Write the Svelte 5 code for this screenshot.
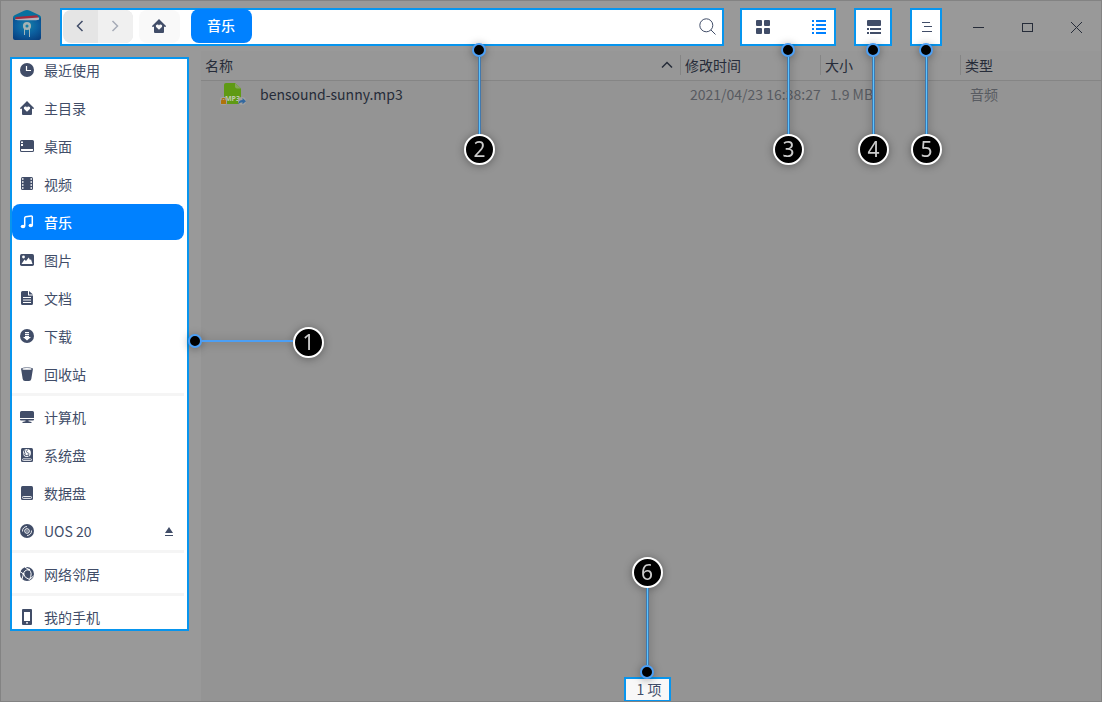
<script>
  const groups = [
    [
      { name: '最近使用', icon: 'recent' },
      { name: '主目录', icon: 'home' },
      { name: '桌面', icon: 'desktop' },
      { name: '视频', icon: 'video' },
      { name: '音乐', icon: 'music', active: true },
      { name: '图片', icon: 'picture' },
      { name: '文档', icon: 'document' },
      { name: '下载', icon: 'download' },
      { name: '回收站', icon: 'trash' }
    ],
    [
      { name: '计算机', icon: 'computer' },
      { name: '系统盘', icon: 'system' },
      { name: '数据盘', icon: 'disk' },
      { name: 'UOS 20', icon: 'optical', eject: true }
    ],
    [{ name: '网络邻居', icon: 'network' }],
    [{ name: '我的手机', icon: 'phone' }]
  ];
</script>

{#snippet icon(kind)}
  <svg class="icon" viewBox="0 0 14 14" width="14" height="14" fill="currentColor" aria-hidden="true">
    {#if kind === 'recent'}
      <circle cx="7" cy="7" r="7" />
      <path d="M6.500 3v4.500H11" fill="none" stroke="#fff" stroke-width="1.2" />
    {:else if kind === 'home'}
      <path fill-rule="evenodd" d="M7 0 14 7v.8h-2V13a1 1 0 0 1-1 1H3a1 1 0 0 1-1-1V7.800H0V7zM7 10.800 9.900 8C10.700 6.800 9.700 5.500 8.500 5.500 7.700 5.500 7.200 6 7 6.500 6.800 6 6.300 5.500 5.500 5.500 4.300 5.500 3.300 6.800 4.100 8z" />
    {:else if kind === 'desktop'}
      <path fill-rule="evenodd" d="M1.500 1h11A1.500 1.500 0 0 1 14 2.500v9a1.500 1.500 0 0 1-1.500 1.500h-11A1.500 1.500 0 0 1 0 11.500v-9A1.500 1.500 0 0 1 1.500 1zM1 2.500V4h2V2.500zM1 5v2h2V5zM1 10v1.500l.5.5h11l.5-.5V10z" />
    {:else if kind === 'video'}
      <rect x="1" y="0" width="12" height="13" rx="1.500" />
      <path d="M2 2h1.500M2 5h1.500M2 8h1.500M2 11h1.500M10.500 2H12M10.500 5H12M10.500 8H12M10.500 11H12" stroke="#fff" stroke-width="1.700" />
    {:else if kind === 'music'}
      <path d="M4.700 11V3q0-1 1-1.200L11.300 1q1-.1 1 1v8.500" fill="none" stroke="currentColor" stroke-width="1.500" />
      <ellipse cx="3" cy="11.500" rx="2.300" ry="1.800" />
      <ellipse cx="10.800" cy="10.500" rx="2.200" ry="1.800" />
    {:else if kind === 'picture'}
      <rect y="1" width="14" height="12" rx="1.700" />
      <circle cx="3.500" cy="4" r="1.400" fill="#fff" />
      <path d="M1.500 11 4.500 6.500 6 8 8.700 4.500 10 7l1-.7L12.500 11z" fill="#fff" />
    {:else if kind === 'document'}
      <path d="M2.500 0H8v4.500h5v8a1.500 1.500 0 0 1-1.500 1.500h-9A1.500 1.500 0 0 1 1 12.500v-11A1.500 1.500 0 0 1 2.500 0zM9 0l4 3.500H9z" />
      <path d="M3 6.500h8M3 9h8M3 11.500h8" stroke="#fff" />
    {:else if kind === 'download'}
      <circle cx="7" cy="7" r="7" />
      <path d="M5 3h4v1.200H5zM5 5h4v1.200H5zM5 7h4v1h2L7 11.500 3 8h2z" fill="#fff" />
    {:else if kind === 'trash'}
      <path d="M1 1.500C2 0 12 0 13 1.500L11.300 12Q11 14 9 14H5Q3 14 2.700 12z" />
      <ellipse cx="7" cy="1.900" rx="4.600" ry=".9" fill="#fff" />
    {:else if kind === 'computer'}
      <path d="M1.500 1h11A1.500 1.500 0 0 1 14 2.500V8H0V2.500A1.500 1.500 0 0 1 1.500 1zM0 9h14v.5q0 1-1 1H1q-1 0-1-1zM5.500 10.500h3v.7l3 .8v1h-9v-1l3-.8z" />
    {:else if kind === 'system'}
      <rect x="1" width="12" height="14" rx="1.500" />
      <circle cx="7" cy="5" r="3.900" fill="#fff" />
      <path d="M5 1.700Q3.500 4 5.500 6.500M7.500 1.500Q5.500 4 7.500 5 9.500 4 8.500 8.500M3.500 6Q6 9 8.500 7" fill="none" stroke="currentColor" stroke-width=".9" />
      <rect x="2.500" y="10.800" width="9" height="1.700" rx=".8" fill="none" stroke="#fff" stroke-width=".8" />
    {:else if kind === 'disk'}
      <rect x="1" width="12" height="14" rx="1.500" />
      <rect x="2.500" y="10.500" width="9" height="1.900" rx=".8" fill="none" stroke="#fff" stroke-width=".9" />
    {:else if kind === 'optical'}
      <circle cx="7" cy="7" r="7" />
      <circle cx="7" cy="7" r="2.300" fill="none" stroke="#fff" />
      <circle cx="7" cy="7" r=".7" fill="#fff" />
      <path d="M2.500 7.500A4.500 4.500 0 0 1 7 2.500M11.500 6.500A4.500 4.500 0 0 1 7 11.500" fill="none" stroke="#fff" stroke-width=".9" />
    {:else if kind === 'network'}
      <circle cx="7" cy="7" r="7" />
      <path d="M9 2.500Q4 3 3.500 7 4.500 11 9.500 12.500M9 2.500Q13 6 9.500 12.500M0 4.500 3.500 7 2 12M9 2.500 5 .3M9.500 12.500l4-3.500" fill="none" stroke="#fff" />
      <circle cx="9" cy="2.700" r="1" fill="#fff" />
      <circle cx="3.500" cy="7" r="1" fill="#fff" />
    {:else if kind === 'phone'}
      <path fill-rule="evenodd" d="M3 -1h8a1 1 0 0 1 1 1v14a1 1 0 0 1-1 1H3a1 1 0 0 1-1-1V0a1 1 0 0 1 1-1zM4 2v9h6V2zM6 12.200v1.300h2v-1.300z" />
    {/if}
  </svg>
{/snippet}

{#snippet callout(number, direction)}
  <span class="callout {direction}">
    <span class="dot"></span>
    <span class="line"></span>
    <span class="number">{number}</span>
  </span>
{/snippet}

<div class="window">
  <header>
    <svg class="logo" viewBox="0 0 28 30" width="28" height="30" aria-hidden="true">
      <defs>
        <radialGradient id="folder" cx=".5" cy=".35" r=".75">
          <stop offset="0" stop-color="#1583a8" />
          <stop offset=".5" stop-color="#0c60a0" />
          <stop offset="1" stop-color="#083f7e" />
        </radialGradient>
      </defs>
      <path d="M0 7.500Q0 6 1.500 5.300L11 .8Q14-.6 17 .8L26.500 5.300Q28 6 28 7.500V12H0z" fill="#07719f" />
      <path d="M2.500 7 24 5.300 26 8v3H2z" fill="#a22a3c" />
      <path d="M2 9.200 26 7.500V11H2z" fill="#b3b3bb" />
      <path d="M0 7.800Q2 10.300 5 10.300H23Q26 10.300 28 7.800V28q0 2-2 2H2q-2 0-2-2z" fill="url(#folder)" />
      <circle cx="14" cy="16" r="2.800" fill="none" stroke="#a5b3b4" stroke-width="2.500" />
      <path d="M11.500 19v6M16.500 19v8" stroke="#a0b5ba" stroke-width="1" />
    </svg>

    <nav class="spot address" aria-label="地址栏">
      <div class="history">
        <button aria-label="后退"><svg viewBox="0 0 8 12" width="8" height="12"><path d="M6.500 1 1.500 6l5 5" /></svg></button>
        <button class="next" aria-label="前进"><svg viewBox="0 0 8 12" width="8" height="12"><path d="M1.500 1l5 5-5 5" /></svg></button>
      </div>
      <button class="home" aria-label="主目录">{@render icon('home')}</button>
      <button class="crumb">音乐</button>
      <button class="search" aria-label="搜索">
        <svg viewBox="0 0 17 17" width="17" height="17"><circle cx="7.300" cy="7.300" r="6.500" /><path d="m12 12 4.500 4.500" /></svg>
      </button>
      {@render callout(2, 'down wide')}
    </nav>

    <div class="spot views">
      <button aria-label="图标视图">
        <svg viewBox="0 0 14 14" width="14" height="14" fill="currentColor"><rect width="6" height="6" rx="1" /><rect x="8" width="6" height="6" rx="1" /><rect y="8" width="6" height="6" rx="1" /><rect x="8" y="8" width="6" height="6" rx="1" /></svg>
      </button>
      <button class="selected" aria-label="列表视图">
        <svg viewBox="0 0 14 14" width="14" height="14" fill="currentColor"><path d="M0 0h2v2H0zM4 0h10v2H4zM0 4h2v2H0zM4 4h10v2H4zM0 8h2v2H0zM4 8h10v2H4zM0 12h2v2H0zM4 12h10v2H4z" /></svg>
      </button>
      {@render callout(3, 'down')}
    </div>

    <div class="spot details">
      <button aria-label="详细信息">
        <svg viewBox="0 0 14 14" width="14" height="14" fill="currentColor"><rect width="14" height="6" rx="1" /><path d="M0 8h2v2H0zM3 8h11v2H3zM0 12h2v2H0zM3 12h11v2H3z" /></svg>
      </button>
      {@render callout(4, 'down')}
    </div>

    <div class="spot menu">
      <button aria-label="主菜单">
        <svg viewBox="0 0 10 12" width="10" height="12"><path d="M0 1.500h8M2 5.500h8M0 10.500h10" /></svg>
      </button>
      {@render callout(5, 'down')}
    </div>

    <div class="controls">
      <button aria-label="最小化"><svg viewBox="0 0 13 13" width="13" height="13"><path d="M1 6.500h11" /></svg></button>
      <button aria-label="最大化"><svg viewBox="0 0 13 13" width="13" height="13"><rect x="1.500" y="2.500" width="10" height="8" /></svg></button>
      <button aria-label="关闭"><svg viewBox="0 0 13 13" width="13" height="13"><path d="m1 1 11 11M12 1 1 12" /></svg></button>
    </div>
  </header>

  <div class="body">
    <aside>
      <div class="spot places">
        <div class="clip">
          {#each groups as group}
            <ul>
              {#each group as place}
                <li>
                  <button class="place" class:active={place.active}>
                    {@render icon(place.icon)}
                    <span>{place.name}</span>
                    {#if place.eject}
                      <svg class="eject" viewBox="0 0 8 9" width="8" height="9" fill="currentColor" aria-hidden="true"><path d="M4 0 8 6H0zM0 8h8v1H0z" /></svg>
                    {/if}
                  </button>
                </li>
              {/each}
            </ul>
          {/each}
        </div>
        {@render callout(1, 'right')}
      </div>
    </aside>

    <main>
      <table>
        <colgroup><col /><col class="date" /><col class="size" /><col class="type" /></colgroup>
        <thead>
          <tr>
            <th>
              <div class="sorted">
                名称
                <svg viewBox="0 0 12 8" width="12" height="8" aria-hidden="true"><path d="m1 6.500 5-5 5 5" /></svg>
              </div>
            </th>
            <th><div class="head">修改时间</div></th>
            <th><div class="head">大小</div></th>
            <th><div class="head">类型</div></th>
          </tr>
        </thead>
        <tbody>
          <tr>
            <td class="name">
              <div class="file">
                <svg viewBox="0 0 26 24" width="26" height="24" aria-hidden="true">
                  <path d="M6 1h9l6 5.500V20q0 2-2 2H6q-2 0-2-2V3q0-2 2-2z" fill="#5f9a14" />
                  <path d="M15 1v3.500q0 2 2 2h4z" fill="#85a55c" />
                  <text x="5" y="19" font-size="7" font-weight="700" fill="#c0cab5">MP3</text>
                  <rect x="0" y="15" width="7" height="8" rx="2" fill="#a1a1a1" />
                  <rect x="1" y="18" width="5" height="4" rx=".6" fill="#b0720a" />
                  <path d="M2.200 18v-1.500h2.600V18" fill="none" stroke="#b0720a" />
                  <circle cx="22" cy="19" r="4" fill="#a1a1a1" />
                  <path d="M18.500 22q0-4 4-4v-2l3.500 3.200-3.500 3v-2q-2.500 0-4 1.800z" fill="#3268a0" />
                </svg>
                bensound-sunny.mp3
              </div>
            </td>
            <td>2021/04/23 16:38:27</td>
            <td>1.9 MB</td>
            <td>音频</td>
          </tr>
        </tbody>
      </table>
      <footer>
        <div class="spot status">1 项{@render callout(6, 'up')}</div>
      </footer>
    </main>
  </div>
</div>

<style>
  :global(body) {
    margin: 0;
  }

  .window {
    --ink: #414d68;
    --accent: #0081ff;
    box-sizing: border-box;
    display: flex;
    flex-direction: column;
    min-height: 100vh;
    border: 1px solid #838383;
    background: #999;
    color: #262c39;
    font: 14px/20px 'Noto Sans CJK SC', sans-serif;
    overflow: hidden;
  }

  button {
    box-sizing: border-box;
    display: flex;
    align-items: center;
    justify-content: center;
    padding: 0;
    border: 0;
    background: none;
    color: inherit;
    font: inherit;
  }

  button svg {
    flex: none;
  }

  .spot {
    position: relative;
    box-sizing: border-box;
    border: 2px solid #0795ee;
    background: #fff;
    color: var(--ink);
  }

  header {
    display: flex;
    padding: 7px 0 5px 12px;
  }

  header .spot {
    display: flex;
    align-items: center;
    height: 38px;
  }

  header button svg:not([fill]),
  .sorted svg {
    fill: none;
    stroke: currentColor;
  }

  .logo {
    margin: 2px 19px 0 0;
  }

  .address {
    flex: 1;
    padding: 0 6px 2px 1px;
  }

  .history {
    display: flex;
    overflow: hidden;
    border-radius: 8px;
    background: #e5e5e5;
  }

  .history button {
    width: 35px;
    height: 33px;
    padding: 0 1px 1px 0;
  }

  .history path,
  .sorted path {
    stroke-width: 1.5;
  }

  .history .next {
    background: #f0f0f0;
    color: #a6abb7;
  }

  .home {
    width: 41px;
    height: 33px;
    margin: 0 11px 0 6px;
    padding: 0 1px 1px 0;
    border-radius: 8px;
    background: #f9f9f9;
  }

  .crumb {
    width: 61px;
    height: 34px;
    padding: 0 1px 2px 0;
    border-radius: 8px;
    background: var(--accent);
    color: #fff;
    font-weight: 500;
  }

  .search {
    margin-left: auto;
  }

  .views {
    justify-content: flex-end;
    gap: 26px;
    width: 96px;
    margin: 0 18px 0 16px;
  }

  .views button {
    width: 30px;
    height: 34px;
  }

  .selected {
    color: var(--accent);
  }

  .details {
    justify-content: center;
    width: 38px;
    margin-right: 18px;
  }

  .details button {
    padding-left: 2px;
  }

  .menu {
    justify-content: center;
    width: 32px;
  }

  .menu button {
    padding-left: 2px;
  }

  .controls {
    display: flex;
    margin-left: 12px;
  }

  .controls button {
    width: 49px;
    height: 38px;
  }

  .body {
    display: flex;
    flex: 1;
  }

  aside {
    box-sizing: border-box;
    flex: none;
    width: 200px;
    padding: 6px 12px 0 9px;
  }

  .clip {
    overflow: hidden;
    padding-right: 3px;
  }

  ul {
    display: flex;
    flex-direction: column;
    gap: 2px;
    margin: 0;
    padding: 0;
    list-style: none;
  }

  ul:first-child {
    margin-top: -7px;
  }

  ul:last-child {
    margin-bottom: -6px;
  }

  ul + ul::before {
    content: '';
    height: 3px;
    margin: 1px 0;
    background: #f5f5f5;
  }

  .place {
    justify-content: flex-start;
    gap: 10px;
    width: 100%;
    height: 36px;
    padding: 0 11px 0 8px;
    border-radius: 8px;
  }

  .place span {
    padding-bottom: 1px;
  }

  .active {
    background: var(--accent);
    color: #fff;
    font-weight: 500;
  }

  .icon {
    overflow: visible;
  }

  .eject {
    margin-left: auto;
  }

  main {
    display: flex;
    flex: 1;
    flex-direction: column;
    justify-content: space-between;
    background: #949494;
  }

  table {
    width: 100%;
    border-spacing: 0;
    table-layout: fixed;
  }

  .date,
  .size {
    width: 140px;
  }

  .type {
    width: 141px;
  }

  th {
    box-sizing: border-box;
    height: 30px;
    padding: 0 0 1px;
    border-bottom: 1px solid #858585;
    background: #979797;
    font-weight: 400;
    text-align: left;
  }

  .head {
    padding-left: 4px;
    border-left: 1px solid #858585;
  }

  .sorted {
    display: flex;
    align-items: center;
    justify-content: space-between;
    padding: 0 7px 0 4px;
  }

  td {
    height: 26px;
    padding: 0 0 0 10px;
    color: #585b61;
    white-space: nowrap;
  }

  .name {
    padding-left: 19px;
    color: #262c39;
  }

  .file {
    display: flex;
    align-items: center;
    gap: 14px;
  }

  .file text {
    font-family: 'Noto Sans', sans-serif;
  }

  footer {
    display: flex;
    justify-content: center;
    padding-right: 7px;
  }

  .status {
    width: 47px;
    height: 25px;
    margin-bottom: -1px;
    padding-left: 3px;
    background: #f8f8f8;
    text-align: center;
  }

  .callout {
    position: absolute;
    z-index: 1;
    display: flex;
    align-items: center;
    filter: drop-shadow(0 1px 4px rgb(0 0 0 / 35%));
  }

  .down {
    top: calc(100% - 1px);
    left: calc(50% - 15px);
    flex-direction: column;
  }

  .wide {
    left: 402px;
  }

  .up {
    bottom: 100%;
    left: calc(50% - 16px);
    flex-direction: column-reverse;
  }

  .right {
    top: calc(50% - 17px);
    left: calc(100% + 1px);
  }

  .dot {
    box-sizing: border-box;
    width: 14px;
    height: 14px;
    margin-right: 1px;
    border: 2px solid #4c9ff5;
    border-radius: 50%;
    background: #000;
  }

  .line {
    box-sizing: border-box;
    width: 3px;
    height: 77px;
    border: solid #4278ac;
    border-width: 0 1px;
    background: #5ac3ff;
  }

  .right .dot,
  .right .line {
    margin: 0 0 3px;
  }

  .right .line {
    width: 91px;
    height: 2px;
    border: 0;
    background: #4c9ff5;
  }

  .number {
    box-sizing: border-box;
    width: 31px;
    height: 31px;
    border: 2px solid #fff;
    border-radius: 50%;
    background: #000;
    color: #ccc;
    font: 21px/27px 'Noto Sans', sans-serif;
    text-align: center;
  }
</style>
